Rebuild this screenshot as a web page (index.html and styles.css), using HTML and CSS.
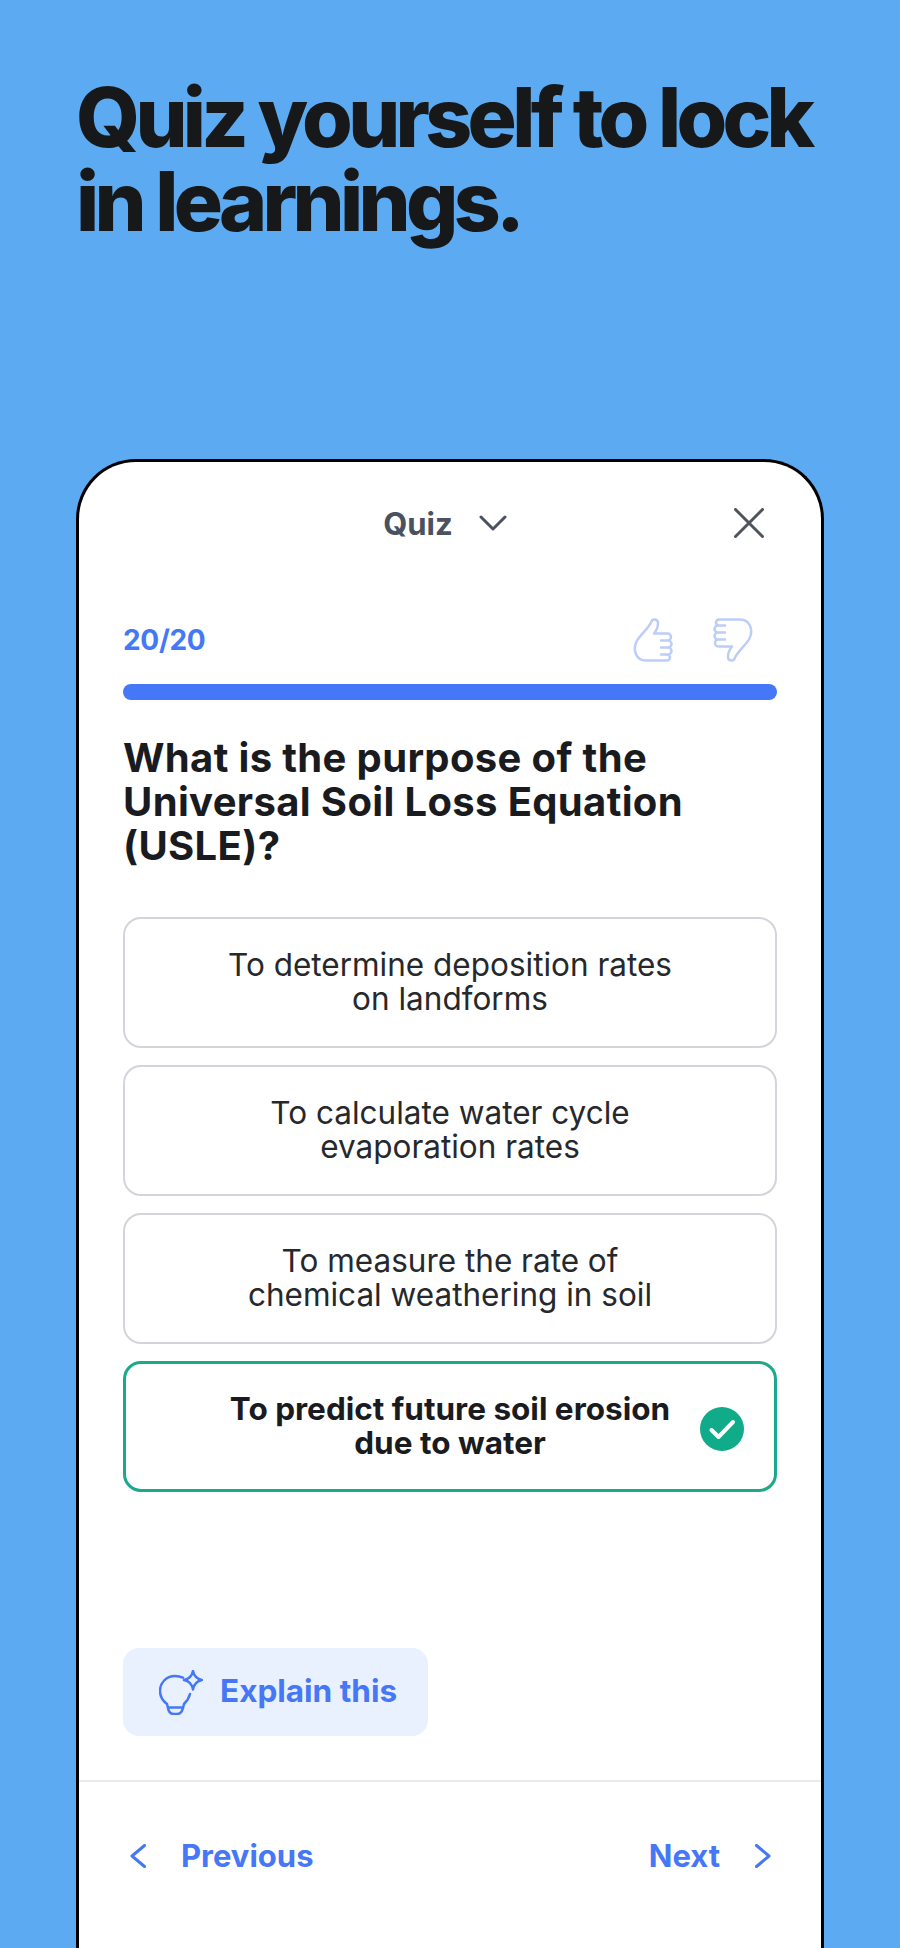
FILE: index.html
```html
<!DOCTYPE html>
<html lang="en">
<head>
<meta charset="utf-8">
<title>Quiz</title>
<link rel="stylesheet" href="styles.css">
</head>
<body>
<h1 class="headline">Quiz yourself to lock<br>in learnings.</h1>
<main class="card">
  <header class="topbar">
    <div class="title"><span>Quiz</span>
      <svg class="chev-down" viewBox="0 0 28 16"><path d="M2 2l12 12L26 2"/></svg>
    </div>
    <svg class="close" viewBox="0 0 30 30"><path d="M1.500 1.500l27 27M28.500 1.500l-27 27"/></svg>
  </header>
  <section class="quiz">
    <div class="meta">
      <span class="count">20/20</span>
      <div class="rate">
        <svg class="thumb" viewBox="0 0 40 44"><path d="M21 15.500C24 12 25 8 25 5C25 .8 19 0 18 4.500C15 11 7 17 3.500 23.500C-.5 32 3 42.500 13 42.500H34a3 3 0 0 0 0-6H28M34 36.500h1a3.500 3.500 0 0 0 0-7H28M35 29.500a3.500 3.500 0 0 0 0-7H28M34.500 22.500a3.500 3.500 0 0 0 0-7H21"/></svg>
        <svg class="thumb down" viewBox="0 0 40 44"><path d="M21 15.500C24 12 25 8 25 5C25 .8 19 0 18 4.500C15 11 7 17 3.500 23.500C-.5 32 3 42.500 13 42.500H34a3 3 0 0 0 0-6H28M34 36.500h1a3.500 3.500 0 0 0 0-7H28M35 29.500a3.500 3.500 0 0 0 0-7H28M34.500 22.500a3.500 3.500 0 0 0 0-7H21"/></svg>
      </div>
    </div>
    <div class="progress"></div>
    <h2 class="question">What is the purpose of the<br>Universal Soil Loss Equation<br>(USLE)?</h2>
    <div class="options">
      <div class="option">To determine deposition rates<br>on landforms</div>
      <div class="option">To calculate water cycle<br>evaporation rates</div>
      <div class="option">To measure the rate of<br>chemical weathering in soil</div>
      <div class="option correct">To predict future soil erosion<br>due to water
        <svg class="tick" viewBox="0 0 44 44"><circle cx="22" cy="22" r="22"/><path d="M11.500 23l7 7L33 15"/></svg>
      </div>
    </div>
    <button class="explain">
      <svg class="bulb" viewBox="0 0 44 45"><path d="M24 7.600C21 6.400 18 6 16 6C7 6 1 13 1 21C1 27 4 31 8 34L9 38C9.600 42 12 44 15 44H18C21 44 23 42 24 38L25 34C28 31 30 28 31 24M9 37.500H24M34 1C35 6 38 9 43 10C38 11 35 14 34 19.500C33 14 30 11 25 10C30 9 33 6 34 1Z"/></svg>
      <span class="explain-label">Explain this</span>
    </button>
  </section>
  <footer class="pager">
    <a class="nav"><svg class="chev" viewBox="0 0 16 24"><path d="M14.500 1.500L2 12l12.500 10.500"/></svg><span>Previous</span></a>
    <a class="nav"><span>Next</span><svg class="chev" viewBox="0 0 16 24"><path d="M1.500 1.500L14 12 1.500 22.500"/></svg></a>
  </footer>
</main>
</body>
</html>
```
FILE: styles.css
```css
* { box-sizing: border-box; }
html, body { margin: 0; height: 1948px; }
body {
  display: flex;
  flex-direction: column;
  overflow: hidden;
  background: #5caaf1;
  font-family: "Inter", "Open Sans", sans-serif;
}
.headline {
  margin: 0;
  height: 459px;
  padding: 76px 0 0 76px;
  font-size: 82px;
  line-height: 84px;
  font-weight: 800;
  letter-spacing: -4.700px;
  color: #161819;
  white-space: nowrap;
}
.card {
  flex: 1;
  width: 748px;
  margin-left: 76px;
  background: #fff;
  border: 3px solid #000;
  border-bottom: 0;
  border-radius: 60px 60px 0 0;
}
.topbar {
  display: grid;
  grid-template-columns: 1fr auto 1fr;
  align-items: center;
  height: 60px;
  margin-top: 31px;
  padding: 0 57px 0 47px;
}
.title {
  grid-column: 2;
  display: flex;
  align-items: center;
  gap: 26px;
  font-size: 31px;
  font-weight: 700;
  color: #4a5160;
}
.chev-down { width: 28px; height: 16px; }
.chev-down path { fill: none; stroke: #4a5160; stroke-width: 3; stroke-linecap: round; stroke-linejoin: round; }
.close { grid-column: 3; justify-self: end; width: 30px; height: 30px; }
.close path { fill: none; stroke: #4e535c; stroke-width: 3; stroke-linecap: round; }
.quiz { padding: 0 44px; }
.meta {
  display: flex;
  justify-content: space-between;
  align-items: center;
  height: 44px;
  margin-top: 65px;
  padding-right: 24px;
}
.count { font-size: 28px; font-weight: 700; letter-spacing: -.3px; color: #4577f6; }
.rate { display: flex; gap: 40px; }
.thumb { width: 40px; height: 44px; }
.thumb path { fill: none; stroke: #bccdf8; stroke-width: 2.500; stroke-linecap: round; stroke-linejoin: round; }
.thumb.down { transform: rotate(180deg); }
.progress { height: 16px; margin-top: 22px; border-radius: 8px; background: #4577f6; }
.question {
  margin: 36px 0 49px;
  font-size: 40px;
  line-height: 44px;
  font-weight: 700;
  letter-spacing: .35px;
  color: #191b1f;
  white-space: nowrap;
}
.options { display: flex; flex-direction: column; gap: 17px; }
.option {
  position: relative;
  display: flex;
  flex-direction: column;
  justify-content: center;
  height: 131px;
  padding-bottom: 2px;
  border: 2px solid #d2d5da;
  border-radius: 18px;
  font-size: 31.500px;
  line-height: 34px;
  color: #26282c;
  text-align: center;
}
.option.correct { display: block; padding-top: 28px; border: 3px solid #1aa98a; font-weight: 700; color: #191b1f; }
.tick { position: absolute; top: 43px; right: 30px; width: 44px; height: 44px; }
.tick circle { fill: #10ab88; }
.tick path { fill: none; stroke: #fff; stroke-width: 4; stroke-linecap: round; stroke-linejoin: round; }
.explain {
  display: flex;
  align-items: center;
  gap: 17px;
  width: 305px;
  height: 88px;
  margin-top: 156px;
  padding: 0 0 0 36px;
  border: 0;
  border-radius: 16px;
  background: #e9f0fe;
  font: 700 31.500px "Inter", sans-serif;
  color: #4577f6;
}
.explain-label { margin-top: -4px; }
.bulb { width: 44px; height: 45px; }
.bulb path { fill: none; stroke: #4577f6; stroke-width: 2.500; stroke-linecap: round; stroke-linejoin: round; }
.pager {
  display: flex;
  justify-content: space-between;
  align-items: center;
  height: 149px;
  margin-top: 44px;
  padding: 0 50px 0 51px;
  border-top: 2px solid #e9eaec;
}
.nav { display: flex; align-items: center; gap: 35px; font-size: 31px; font-weight: 700; color: #4577f6; }
.chev { width: 16px; height: 24px; }
.chev path { fill: none; stroke: #4577f6; stroke-width: 3; stroke-linecap: round; stroke-linejoin: round; }
```
